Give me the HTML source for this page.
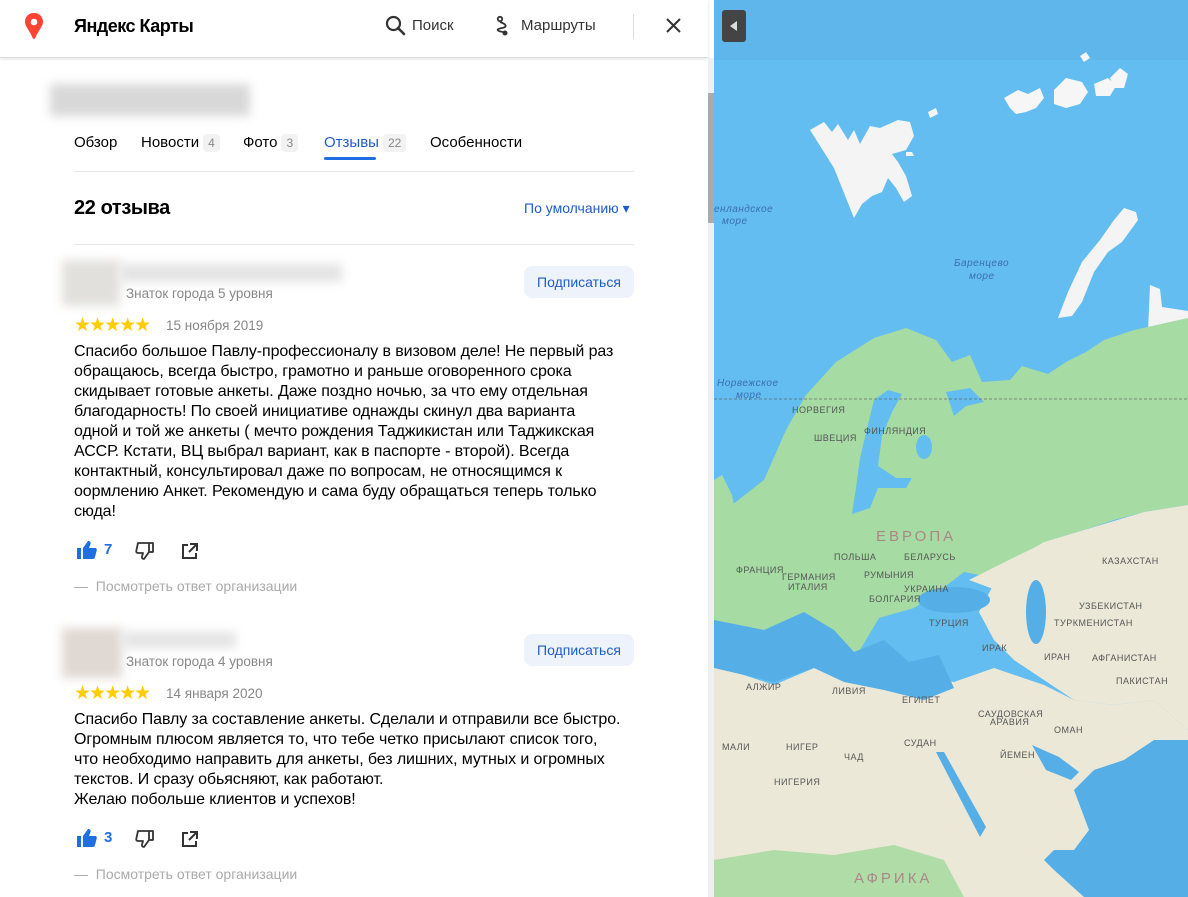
<!DOCTYPE html>
<html><head><meta charset="utf-8"><style>
*{margin:0;padding:0;box-sizing:border-box}
body{width:1188px;height:897px;overflow:hidden;font-family:"Liberation Sans",sans-serif;color:#000;background:#fff;position:relative}
.panel{position:absolute;left:0;top:0;width:714px;height:897px;background:#fff;overflow:hidden}
.hdr{position:absolute;left:0;top:0;width:708px;height:58px;border-bottom:1px solid #ddd;box-shadow:0 1px 3px rgba(0,0,0,.12);background:#fff}
.abs{position:absolute;white-space:nowrap}
.tabs span.c{display:inline-block;background:#f2f2f2;color:#888;font-size:12px;padding:2px 5px;border-radius:4px;margin-left:4px}
.tabs{font-size:15px}
.txt{font-size:16px;line-height:20px;letter-spacing:-0.1px;color:#000}
.btn{position:absolute;background:#eef3fb;color:#1f5cc9;font-size:14px;border-radius:8px;width:110px;height:32px;line-height:32px;text-align:center}
.stars{color:#fc0;font-size:19px;letter-spacing:-2px}
.gray{color:#888;font-size:13.5px}
.blurbox{position:absolute;background:#e6e6e6;filter:blur(5px)}
</style></head><body>
<div class="panel">
 <div class="hdr">
  <svg class="abs" style="left:24px;top:13px" width="20" height="26" viewBox="0 0 20 26"><path d="M10 0C4.5 0 1 3.8 1 8.8c0 5 5 9 8 17h2c3-8 8-12 8-17C19 3.8 15.5 0 10 0z" fill="#f43"/><circle cx="10" cy="9" r="3.3" fill="#fff"/></svg>
  <div class="abs" style="left:74px;top:16px;font-size:18px;font-weight:bold;letter-spacing:-0.5px">Яндекс Карты</div>
  <svg class="abs" style="left:385px;top:15px" width="22" height="22" viewBox="0 0 22 22"><circle cx="8.5" cy="8.5" r="6.5" fill="none" stroke="#333" stroke-width="2.2"/><path d="M13 13l6 6" stroke="#333" stroke-width="2.6" stroke-linecap="round"/></svg>
  <div class="abs" style="left:412px;top:17px;font-size:15px;color:#333">Поиск</div>
  <svg class="abs" style="left:494px;top:15px" width="20" height="22" viewBox="0 0 20 22"><circle cx="6" cy="4" r="2.2" fill="none" stroke="#333" stroke-width="1.8"/><circle cx="11" cy="18" r="2.5" fill="#333"/><path d="M6 7c6 2 8 5 2 6s-6 3 1 4" fill="none" stroke="#333" stroke-width="1.8"/></svg>
  <div class="abs" style="left:521px;top:17px;font-size:15px;color:#333">Маршруты</div>
  <div class="abs" style="left:633px;top:14px;width:1px;height:25px;background:#ddd"></div>
  <svg class="abs" style="left:666px;top:18px" width="15" height="15" viewBox="0 0 15 15"><path d="M1 1l13 13M14 1L1 14" stroke="#333" stroke-width="2"/></svg>
 </div>
 <div class="abs" style="left:708px;top:58px;width:6px;height:839px;background:#f0f0f0"></div>
 <div class="abs" style="left:708px;top:93px;width:6px;height:130px;background:#aaa"></div>
 <div class="blurbox" style="left:50px;top:84px;width:200px;height:32px;background:#d8d8d8"></div>
 <div class="abs tabs" style="left:74px;top:134px">Обзор</div>
 <div class="abs tabs" style="left:141px;top:134px">Новости<span class="c">4</span></div>
 <div class="abs tabs" style="left:243px;top:134px">Фото<span class="c">3</span></div>
 <div class="abs tabs" style="left:324px;top:134px;color:#1f5cc9">Отзывы<span class="c">22</span></div>
 <div class="abs" style="left:324px;top:157px;width:52px;height:3px;background:#1f6fe3;border-radius:2px"></div>
 <div class="abs tabs" style="left:430px;top:134px">Особенности</div>
 <div class="abs" style="left:74px;top:171px;width:560px;height:1px;background:#e6e6e6"></div>
 <div class="abs" style="left:74px;top:197px;font-size:20px;font-weight:bold;letter-spacing:-0.4px">22 отзыва</div>
 <div class="abs" style="left:524px;top:200px;font-size:14px;color:#1f5cc9">По умолчанию ▾</div>
 <div class="abs" style="left:74px;top:244px;width:560px;height:1px;background:#e6e6e6"></div>

 <div class="blurbox" style="left:62px;top:260px;width:58px;height:46px;background:#e2e0dc"></div>
 <div class="blurbox" style="left:120px;top:264px;width:222px;height:18px;background:#e3e3e3"></div>
 <div class="abs gray" style="left:126px;top:286px">Знаток города 5 уровня</div>
 <div class="btn" style="left:524px;top:266px">Подписаться</div>
 <div class="abs stars" style="left:74px;top:314px">★★★★★</div>
 <div class="abs gray" style="left:166px;top:318px">15 ноября 2019</div>
 <div class="abs txt" style="left:74px;top:342px">Спасибо большое Павлу-профессионалу в визовом деле! Не первый раз<br>обращаюсь, всегда быстро, грамотно и раньше оговоренного срока<br>скидывает готовые анкеты. Даже поздно ночью, за что ему отдельная<br>благодарность! По своей инициативе однажды скинул два варианта<br>одной и той же анкеты ( мечто рождения Таджикистан или Таджикская<br>АССР. Кстати, ВЦ выбрал вариант, как в паспорте - второй). Всегда<br>контактный, консультировал даже по вопросам, не относящимся к<br>оормлению Анкет. Рекомендую и сама буду обращаться теперь только<br>сюда!</div>
 <svg class="abs" style="left:77px;top:541px" width="20" height="18" viewBox="0 0 20 18"><rect x="0" y="7" width="4" height="11" fill="#1f6fe3"/><path d="M6 7l5-7c2 0 3 1 2.5 3L12 7h6c1.5 0 2 1 1.7 2.5L18 16c-.3 1.3-1 2-2 2H6z" fill="#1f6fe3"/></svg>
 <div class="abs" style="left:104px;top:541px;font-size:15px;font-weight:bold;color:#1f6fe3">7</div>
 <svg class="abs" style="left:135px;top:542px" width="20" height="18" viewBox="0 0 20 18"><path d="M3 1h11v9l-5 7c-1.5 0-2.3-1-2-2.5L8 11H3c-1.3 0-2-1-1.7-2.3L3 1z M14 1h4v9h-4" fill="none" stroke="#333" stroke-width="1.8" stroke-linejoin="round"/></svg>
 <svg class="abs" style="left:181px;top:543px" width="17" height="17" viewBox="0 0 17 17"><path d="M7 2H2v13h13v-5M9 1h7v7M16 1L8 9" fill="none" stroke="#333" stroke-width="2"/></svg>
 <div class="abs gray" style="left:74px;top:578px;color:#aaa;font-size:14px">—&nbsp; Посмотреть ответ организации</div>

 <div class="blurbox" style="left:62px;top:628px;width:60px;height:50px;background:#e0d8d2"></div>
 <div class="blurbox" style="left:122px;top:632px;width:114px;height:16px;background:#e3e3e3"></div>
 <div class="abs gray" style="left:126px;top:654px">Знаток города 4 уровня</div>
 <div class="btn" style="left:524px;top:634px">Подписаться</div>
 <div class="abs stars" style="left:74px;top:682px">★★★★★</div>
 <div class="abs gray" style="left:166px;top:686px">14 января 2020</div>
 <div class="abs txt" style="left:74px;top:710px">Спасибо Павлу за составление анкеты. Сделали и отправили все быстро.<br>Огромным плюсом является то, что тебе четко присылают список того,<br>что необходимо направить для анкеты, без лишних, мутных и огромных<br>текстов. И сразу обьясняют, как работают.<br>Желаю побольше клиентов и успехов!</div>
 <svg class="abs" style="left:77px;top:829px" width="20" height="18" viewBox="0 0 20 18"><rect x="0" y="7" width="4" height="11" fill="#1f6fe3"/><path d="M6 7l5-7c2 0 3 1 2.5 3L12 7h6c1.5 0 2 1 1.7 2.5L18 16c-.3 1.3-1 2-2 2H6z" fill="#1f6fe3"/></svg>
 <div class="abs" style="left:104px;top:829px;font-size:15px;font-weight:bold;color:#1f6fe3">3</div>
 <svg class="abs" style="left:135px;top:830px" width="20" height="18" viewBox="0 0 20 18"><path d="M3 1h11v9l-5 7c-1.5 0-2.3-1-2-2.5L8 11H3c-1.3 0-2-1-1.7-2.3L3 1z M14 1h4v9h-4" fill="none" stroke="#333" stroke-width="1.8" stroke-linejoin="round"/></svg>
 <svg class="abs" style="left:181px;top:831px" width="17" height="17" viewBox="0 0 17 17"><path d="M7 2H2v13h13v-5M9 1h7v7M16 1L8 9" fill="none" stroke="#333" stroke-width="2"/></svg>
 <div class="abs gray" style="left:74px;top:866px;color:#aaa;font-size:14px">—&nbsp; Посмотреть ответ организации</div>
</div>

<svg class="abs" style="left:714px;top:0" width="474" height="897" viewBox="0 0 474 897">
 <rect width="474" height="897" fill="#63bdf0"/>
 <rect width="474" height="60" fill="#5eb6ea"/>
 <!-- Svalbard -->
 <path d="M96 130l14-8 8 10 6-8 10 16 6-10 6 14 10-18 10 2 18-8 12 2 4 14-8 14-14 4 6 8 8 14 6 20-8 6-8-14-8-10-6 14-10 4-10 8-8 14-12-30-8-20z" fill="#f4f4f4"/>
 <path d="M214 112l8-4 2 6-8 4zM192 152l6 0 2 4-8 0z" fill="#f6f6f6"/>
 <!-- Franz Josef -->
 <path d="M290 98l14-8 10 4 12-6 4 10-8 10-10 4-10 2-6-6zM340 90l12-12 16 4 6 10-8 12-14 4-12-4zM366 56l6-4 4 6-6 4zM380 84l14-6 8 8-6 10-14 0zM396 78l10-10 8 6-4 14-10 0z" fill="#f6f6f6"/>
 <!-- Novaya Zemlya -->
 <path d="M410 208l12 4 2 8-16 22-14 10-14 20-12 30-10 14-14 2 10-26 14-30 18-22 14-20z" fill="#f4f4f4"/>
 <path d="M436 285l10 4 2 18 26 4 0 20-40 0z" fill="#f4f4f4"/>
 <!-- Land green -->
 <path d="M0 525L18 505 50 480 72 430 92 395 122 362 160 338 192 328 222 340 238 362 256 355 268 382 296 380 308 366 334 374 352 362 372 352 390 340 420 330 474 318 474 505 430 512 400 520 370 530 330 542 300 560 280 578 250 572 220 595 200 608 165 618 140 660 110 656 80 648 60 675 35 660 0 650z" fill="#a6dba3"/>
 <path d="M0 480l8-5 10 20 6 30-12 20-12 0z" fill="#a6dba3"/>
 <!-- Baltic / White sea -->
 <path d="M160 400l14-10 14 4-10 18-10 24-4 30 18 12 16 0-6 10-28 0-8 20-18 6 4-26 4-30z" fill="#63bdf0"/>
 <path d="M232 392l24-4 14 14-18 4-12 10z" fill="#63bdf0"/>
 <ellipse cx="210" cy="447" rx="8" ry="12" fill="#63bdf0"/>
 <!-- Central Asia beige -->
 <path d="M300 560L330 542 370 530 430 512 474 505 474 730 440 700 400 705 360 700 330 680 300 660 280 640 265 612 282 580z" fill="#ece8d8"/>
 <path d="M255 580l20-10 30 -15 25-12 0 40-40 10z" fill="#ece8d8"/>
 <!-- Africa/Arabia beige -->
 <path d="M0 665L60 685 100 668 140 680 190 672 240 682 280 668 330 685 360 700 400 705 440 700 474 730 474 897 0 897z" fill="#ece8d8"/>
 <path d="M0 860L60 850 120 855 180 845 230 860 250 897 0 897z" fill="#b0dca8"/>
 <!-- Med -->
 <path d="M0 620L50 630 90 612 120 630 140 652 170 640 195 662 225 655 240 688 210 700 170 690 130 682 100 668 60 682 0 668z" fill="#55aee6"/>
 <ellipse cx="240" cy="600" rx="36" ry="13" fill="#55aee6"/>
 <ellipse cx="322" cy="612" rx="10" ry="32" fill="#55aee6"/>
 <!-- Red sea, Gulf, Arabian sea -->
 <path d="M222 752l8 0 42 75-6 10z" fill="#55aee6"/>
 <path d="M318 745l14 25 25 10 8-8-20-15z" fill="#55aee6"/>
 <path d="M360 790l15 40-15 20-20 0 -10 10 10 10 30 27 H474 V740 L440 740 410 760 380 770z" fill="#55aee6"/>
 <path d="M0 399H474" stroke="#555" stroke-width="1" stroke-dasharray="3 2" opacity=".6"/>
 <g font-family="Liberation Sans,sans-serif" font-size="9" fill="#555" letter-spacing="0.5">
  <text x="162" y="541" font-size="15" fill="#a88" letter-spacing="3">ЕВРОПА</text>
  <text x="140" y="883" font-size="15" fill="#a88" letter-spacing="3">АФРИКА</text>
  <text x="190" y="560">БЕЛАРУСЬ</text><text x="190" y="592">УКРАИНА</text>
  <text x="150" y="434">ФИНЛЯНДИЯ</text><text x="78" y="413">НОРВЕГИЯ</text><text x="100" y="441">ШВЕЦИЯ</text>
  <text x="120" y="560">ПОЛЬША</text><text x="68" y="580">ГЕРМАНИЯ</text><text x="22" y="573">ФРАНЦИЯ</text>
  <text x="150" y="578">РУМЫНИЯ</text><text x="74" y="590">ИТАЛИЯ</text><text x="155" y="602">БОЛГАРИЯ</text>
  <text x="215" y="626">ТУРЦИЯ</text><text x="268" y="651">ИРАК</text><text x="330" y="660">ИРАН</text>
  <text x="388" y="564">КАЗАХСТАН</text><text x="365" y="609">УЗБЕКИСТАН</text><text x="340" y="626">ТУРКМЕНИСТАН</text>
  <text x="264" y="717">САУДОВСКАЯ</text><text x="276" y="725">АРАВИЯ</text><text x="188" y="703">ЕГИПЕТ</text>
  <text x="118" y="694">ЛИВИЯ</text><text x="32" y="690">АЛЖИР</text><text x="190" y="746">СУДАН</text>
  <text x="72" y="750">НИГЕР</text><text x="8" y="750">МАЛИ</text><text x="130" y="760">ЧАД</text>
  <text x="60" y="785">НИГЕРИЯ</text><text x="286" y="758">ЙЕМЕН</text><text x="340" y="733">ОМАН</text>
  <text x="378" y="661">АФГАНИСТАН</text><text x="402" y="684">ПАКИСТАН</text>
  <text x="0" y="212" font-style="italic" font-size="10" fill="#3a6fb0">енландское</text><text x="8" y="224" font-style="italic" font-size="10" fill="#3a6fb0">море</text>
  <text x="240" y="266" font-style="italic" font-size="10" fill="#3a6fb0">Баренцево</text><text x="255" y="279" font-style="italic" font-size="10" fill="#3a6fb0">море</text>
  <text x="3" y="386" font-style="italic" font-size="10" fill="#3a6fb0">Норвежское</text><text x="22" y="398" font-style="italic" font-size="10" fill="#3a6fb0">море</text>
 </g>
 <rect x="8" y="10" width="24" height="32" rx="3" fill="#444"/>
 <path d="M23 21v10l-7-5z" fill="#ddd"/>
</svg>
</body></html>
